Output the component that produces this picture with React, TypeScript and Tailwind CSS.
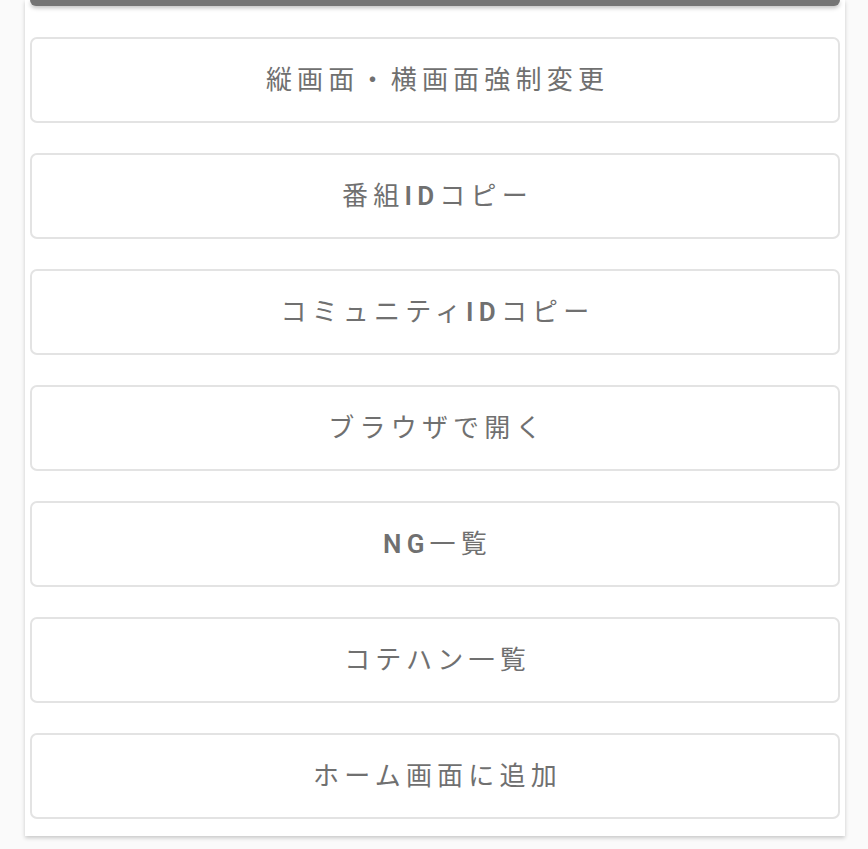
const items: { label: React.ReactNode }[] = [
  { label: "縦画面・横画面強制変更" },
  { label: <>番組<span className="font-semibold">ID</span>コピー</> },
  { label: <>コミュニティ<span className="font-semibold">ID</span>コピー</> },
  { label: "ブラウザで開く" },
  { label: <><span className="font-semibold">NG</span>一覧</> },
  { label: "コテハン一覧" },
  { label: "ホーム画面に追加" },
];

function MenuButton({ label }: { label: React.ReactNode }) {
  return (
    <button className="flex h-[86px] w-full items-center justify-center rounded-[7px] border-2 border-[#e3e3e3] bg-white pl-[5px] text-[26px] tracking-[0.2em] text-[#707070]">
      {label}
    </button>
  );
}

export default function App() {
  return (
    <div
      className="h-[849px] w-[868px] overflow-hidden bg-[#fafafa]"
      style={{ fontFamily: "Roboto, 'Noto Sans CJK JP', sans-serif" }}
    >
      <div className="ml-[25px] h-[836px] w-[820px] bg-white px-[5px] shadow-[0_2px_4px_rgba(0,0,0,0.2)]">
        <div className="h-[6px] rounded-b-[8px] bg-[#757575] shadow-[0_2px_4px_rgba(0,0,0,0.25)]" />
        <div className="mt-[31px] flex flex-col gap-[30px]">
          {items.map((it, i) => (
            <MenuButton key={i} label={it.label} />
          ))}
        </div>
      </div>
    </div>
  );
}
